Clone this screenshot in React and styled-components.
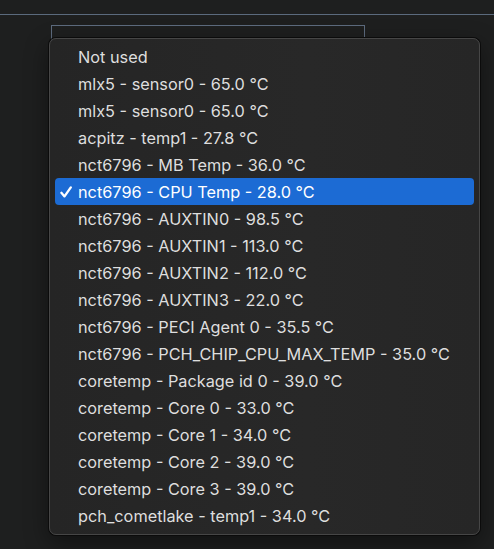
import React from "react";
import styled, { createGlobalStyle } from "styled-components";

const Global = createGlobalStyle`
  html, body { margin: 0; padding: 0; background: #1e1f1f; }
  body { font-family: Inter, "Noto Sans", "Liberation Sans", sans-serif; }
  #root { min-height: 549px; }
`;

const Page = styled.div`
  position: relative;
  width: 494px;
  height: 549px;
  padding-top: 14px;
  box-sizing: border-box;
  overflow: hidden;
`;

const Rule = styled.div`
  height: 1px;
  background: #5b6a7d;
`;

const Field = styled.div`
  margin: 10px 0 0 51px;
  width: 312px;
  height: 40px;
  border: 1px solid #5d6b7e;
`;

const Menu = styled.ul`
  position: absolute;
  left: 49px;
  top: 38px;
  width: 431px;
  box-sizing: border-box;
  margin: 0;
  padding: 4px 5px 5px;
  list-style: none;
  background: linear-gradient(90deg, #252525 0%, #282828 60%, #262626 100%);
  border: 1px solid #464646;
  border-radius: 7px;
  box-shadow: 0 0 0 1px #0b0b0b, 0 8px 24px rgba(0, 0, 0, 0.45);
`;

const Item = styled.li`
  position: relative;
  height: 27px;
  display: flex;
  align-items: center;
  padding-left: 23px;
  border-radius: 4px;
  font-size: 16.3px;
  color: ${(p) => (p.$selected ? "#ffffff" : "#dedede")};
  background: ${(p) => (p.$selected ? "#1c6bd4" : "transparent")};
  white-space: nowrap;
`;

const Check = styled.svg`
  position: absolute;
  left: 5px;
  top: 8px;
  width: 12px;
  height: 12px;
`;

const items = [
  "Not used",
  "mlx5 - sensor0 - 65.0 °C",
  "mlx5 - sensor0 - 65.0 °C",
  "acpitz - temp1 - 27.8 °C",
  "nct6796 - MB Temp - 36.0 °C",
  "nct6796 - CPU Temp - 28.0 °C",
  "nct6796 - AUXTIN0 - 98.5 °C",
  "nct6796 - AUXTIN1 - 113.0 °C",
  "nct6796 - AUXTIN2 - 112.0 °C",
  "nct6796 - AUXTIN3 - 22.0 °C",
  "nct6796 - PECI Agent 0 - 35.5 °C",
  "nct6796 - PCH_CHIP_CPU_MAX_TEMP - 35.0 °C",
  "coretemp - Package id 0 - 39.0 °C",
  "coretemp - Core 0 - 33.0 °C",
  "coretemp - Core 1 - 34.0 °C",
  "coretemp - Core 2 - 39.0 °C",
  "coretemp - Core 3 - 39.0 °C",
  "pch_cometlake - temp1 - 34.0 °C",
];

export default function App() {
  return (
    <Page>
      <Global />
      <Rule />
      <Field />
      <Menu>
        {items.map((t, i) => {
          const sel = i === 5;
          return (
            <Item key={i} $selected={sel}>
              {sel && (
                <Check viewBox="0 0 12 12">
                  <path
                    d="M1.4 6.8 L4.5 10.4 L10.8 1.4"
                    fill="none"
                    stroke="#fff"
                    strokeWidth="2.3"
                    strokeLinecap="round"
                    strokeLinejoin="round"
                  />
                </Check>
              )}
              {t}
            </Item>
          );
        })}
      </Menu>
    </Page>
  );
}
